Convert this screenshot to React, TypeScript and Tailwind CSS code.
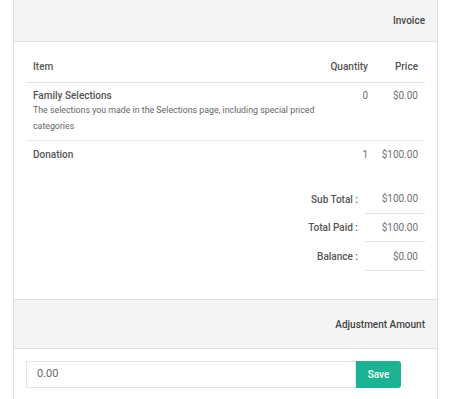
export default function App() {
  const font = { fontFamily: "Roboto, 'Liberation Sans', sans-serif" };
  return (
    <div className="w-[454px] h-[399px] bg-white overflow-hidden" style={font}>
      <div className="ml-[13px] w-[425px] border-x border-[#dddddd] text-[#6f7173]">
        <div className="h-[42px] bg-[#f4f4f4] border-b border-[#e0e0e0] flex items-center justify-end pr-[12px] text-[10px] font-medium text-[#444]">
          Invoice
        </div>
        <div className="px-[12px] pt-[10px] pb-[28px]">
          <table className="w-full text-[10px] border-collapse">
            <thead>
              <tr className="h-[30px] border-b border-[#e3e3e3]">
                <th className="text-left font-medium pl-[7px] text-[#555]">Item</th>
                <th className="text-right font-medium pr-[7px] w-[50px] text-[#555]">Quantity</th>
                <th className="text-right font-medium pr-[7px] w-[50px] text-[#555]">Price</th>
              </tr>
            </thead>
            <tbody>
              <tr className="border-b border-[#e8e8e8] align-top">
                <td className="pl-[7px] pt-[7px] pb-[6px]">
                  <div className="font-medium text-[#555] leading-[12px]">Family Selections</div>
                  <div className="text-[8.8px] leading-[16px] text-[#666]">
                    The selections you made in the Selections page, including special priced categories
                  </div>
                </td>
                <td className="text-right pr-[7px] pt-[7px] leading-[12px]">0</td>
                <td className="text-right pr-[7px] pt-[7px] leading-[12px]">$0.00</td>
              </tr>
              <tr className="align-top">
                <td className="pl-[7px] pt-[8px] pb-[8px] font-medium text-[#555] leading-[12px]">Donation</td>
                <td className="text-right pr-[7px] pt-[8px] leading-[12px]">1</td>
                <td className="text-right pr-[7px] pt-[8px] leading-[12px]">$100.00</td>
              </tr>
            </tbody>
          </table>
          <div className="mt-[16px] flex justify-end text-[10px]">
            <table className="border-collapse">
              <tbody>
                <tr className="h-[29px]">
                  <td className="text-right pr-[7px] font-medium text-[#555]">Sub Total :</td>
                  <td className="text-right pr-[7px] w-[60px] border-b border-[#e3e3e3]">$100.00</td>
                </tr>
                <tr className="h-[28px]">
                  <td className="text-right pr-[7px] font-medium text-[#555]">Total Paid :</td>
                  <td className="text-right pr-[7px] w-[60px] border-b border-[#e3e3e3]">$100.00</td>
                </tr>
                <tr className="h-[29px]">
                  <td className="text-right pr-[7px] font-medium text-[#555]">Balance :</td>
                  <td className="text-right pr-[7px] w-[60px] border-b border-[#e3e3e3]">$0.00</td>
                </tr>
              </tbody>
            </table>
          </div>
        </div>
        <div className="h-[50px] bg-[#f4f4f4] border-y border-[#e0e0e0] flex items-center justify-end pr-[12px] text-[10px] font-medium text-[#444]">
          Adjustment Amount
        </div>
        <div className="px-[12px] pt-[12px] pb-[20px] flex">
          <div className="w-[330px] h-[27px] border border-[#e5e6e7] flex items-center pl-[10px] text-[11px] text-[#666]">
            0.00
          </div>
          <button className="w-[45px] h-[27px] bg-[#1ab394] text-white text-[10px] font-medium rounded-r-[3px]">
            Save
          </button>
        </div>
      </div>
    </div>
  );
}
